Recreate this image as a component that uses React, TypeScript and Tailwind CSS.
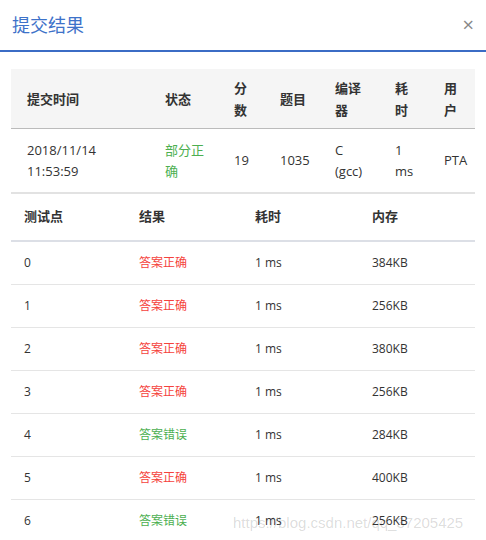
export default function App() {
  const rows = [
    ["0", "答案正确", "384KB", true],
    ["1", "答案正确", "256KB", true],
    ["2", "答案正确", "380KB", true],
    ["3", "答案正确", "256KB", true],
    ["4", "答案错误", "284KB", false],
    ["5", "答案正确", "400KB", true],
    ["6", "答案错误", "256KB", false],
  ] as const;
  const f = { fontFamily: '"Open Sans","Noto Sans CJK SC",sans-serif' };
  return (
    <div className="relative w-[486px] h-[540px] overflow-hidden bg-white text-[13px] text-[#333]" style={f}>
      <div className="flex items-center justify-between h-[52px] pl-[12px] pr-[12px] border-b-2 border-[#3b6cc5]">
        <span className="text-[18px] text-[#3e72c9]">提交结果</span>
        <span className="text-[20px] text-[#888] leading-none">×</span>
      </div>
      <div className="mx-[11px] mt-[17px]">
        <div className="grid grid-cols-[138px_69px_46px_55px_60px_49px_48px] bg-[#f5f5f5] h-[60px] items-center border-b border-[#bbb] font-semibold leading-[22px] pl-[16px]">
          <div>提交时间</div><div>状态</div><div className="w-[16px]">分数</div><div>题目</div><div className="w-[28px]">编译器</div><div className="w-[16px]">耗时</div><div className="w-[16px]">用户</div>
        </div>
        <div className="grid grid-cols-[138px_69px_46px_55px_60px_49px_48px] h-[65px] items-center border-b-2 border-[#e2e2e2] leading-[21px] pl-[16px]">
          <div>2018/11/14<br />11:53:59</div>
          <div className="text-[#4caf50] w-[44px]">部分正确</div>
          <div>19</div><div>1035</div><div>C<br />(gcc)</div><div>1<br />ms</div><div>PTA</div>
        </div>
        <div className="grid grid-cols-[115px_116px_117px_1fr] h-[48px] items-center border-b-2 border-[#dcdfe6] font-semibold pl-[13px]">
          <div>测试点</div><div>结果</div><div>耗时</div><div>内存</div>
        </div>
        {rows.map((r) => (
          <div key={r[0]} className="grid grid-cols-[115px_116px_117px_1fr] h-[43px] items-center border-b border-[#e5e5e5] pl-[13px] text-[12px]">
            <div>{r[0]}</div>
            <div className={r[3] ? "text-[#f5423c]" : "text-[#4caf50]"}>{r[1]}</div>
            <div>1 ms</div>
            <div>{r[2]}</div>
          </div>
        ))}
      </div>
      <div className="absolute left-[233px] top-[512px] text-[15px] text-[#000]/15 pointer-events-none" style={{ fontFamily: '"Liberation Sans",sans-serif' }}>https://blog.csdn.net/qq_37205425</div>
    </div>
  );
}
